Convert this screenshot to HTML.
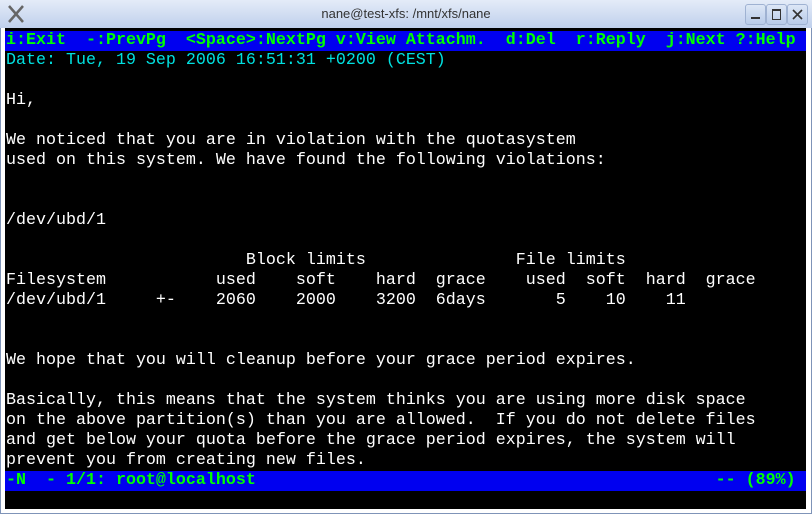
<!DOCTYPE html>
<html><head><style>
body{margin:0;width:812px;height:515px;overflow:hidden;background:#fff;position:relative;font-family:"Liberation Sans",sans-serif}
#tb{position:absolute;left:0;top:0;width:812px;height:28px;background:linear-gradient(#e4ecf8,#bfd0ec);}
#title{position:absolute;left:0;width:812px;top:6px;text-align:center;font-size:13px;color:#333}
.btn{position:absolute;top:4px;width:19px;height:19px;border:1px solid #9fb2d2;border-radius:3px;background:linear-gradient(#dde7f6,#b8cbe9)}
#term{position:absolute;left:5px;top:28px;width:801px;height:481px;background:#000}
#frame{position:absolute;left:0;top:28px;width:810px;height:485px;border:1px solid #7f94b8;border-top:none}
pre{margin:0;position:absolute;left:6px;top:31px;font-family:"Liberation Mono",monospace;font-size:16.67px;line-height:20px;color:#fff}
.bar{background:#0000f0;color:#00ff00;font-weight:bold;display:inline-block;width:800px;margin-left:-1px;padding-left:1px}
.c{color:#00e0e0}
</style></head><body>
<div id="tb">
<svg style="position:absolute;left:6px;top:4px" width="20" height="20" viewBox="0 0 20 20"><path d="M3 2 L17 18 M17 2 L3 18" stroke="#666" stroke-width="2.5"/></svg>
<div id="title">nane@test-xfs: /mnt/xfs/nane</div>
<div class="btn" style="left:745px"><div style="position:absolute;left:5px;top:12px;width:9px;height:2px;background:#333"></div></div>
<div class="btn" style="left:766px"><div style="position:absolute;left:5px;top:4px;width:7px;height:8px;border:1px solid #333;border-top-width:2px"></div></div>
<div class="btn" style="left:787px"><svg width="19" height="19" style="position:absolute;left:0;top:0"><path d="M5 5L14 14M14 5L5 14" stroke="#333" stroke-width="1.6"/></svg></div>
</div>
<div id="frame"></div>
<div id="term"></div>
<pre><span class="bar">i:Exit  -:PrevPg  &lt;Space&gt;:NextPg v:View Attachm.  d:Del  r:Reply  j:Next ?:Help</span>
<span class="c">Date: Tue, 19 Sep 2006 16:51:31 +0200 (CEST)</span>

Hi,

We noticed that you are in violation with the quotasystem
used on this system. We have found the following violations:


/dev/ubd/1

                        Block limits               File limits
Filesystem           used    soft    hard  grace    used  soft  hard  grace
/dev/ubd/1     +-    2060    2000    3200  6days       5    10    11


We hope that you will cleanup before your grace period expires.

Basically, this means that the system thinks you are using more disk space
on the above partition(s) than you are allowed.  If you do not delete files
and get below your quota before the grace period expires, the system will
prevent you from creating new files.
<span class="bar">-N  - 1/1: root@localhost                                              -- (89%) </span></pre>
</body></html>
